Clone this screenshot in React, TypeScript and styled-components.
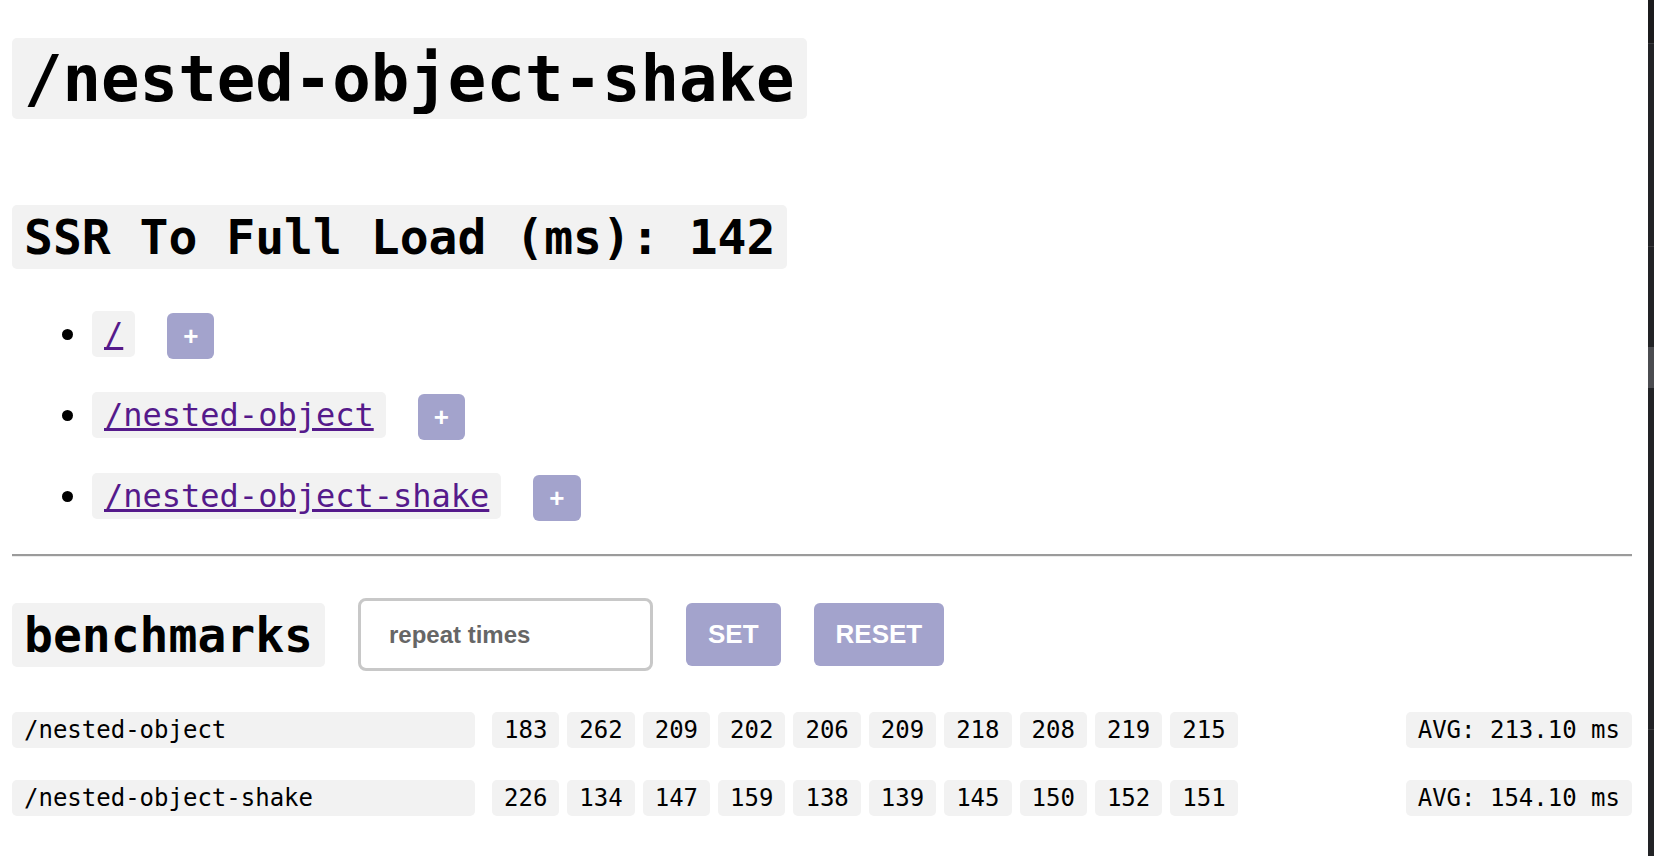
import React from "react";
import styled, { createGlobalStyle } from "styled-components";

const GlobalStyle = createGlobalStyle`
  html, body {
    margin: 0;
    padding: 0;
    background: #ffffff;
    color: #000000;
    font-family: "DejaVu Sans Mono", "Liberation Mono", monospace;
  }
  * { box-sizing: border-box; }
`;

const Page = styled.div`
  display: flex;
  min-height: 856px;
  width: 100%;
`;

const Main = styled.main`
  flex: 1;
  display: flex;
  flex-direction: column;
  padding: 38px 16px 0 12px;
  min-width: 0;
`;

const SideStrip = styled.div`
  width: 6px;
  flex-shrink: 0;
  background: linear-gradient(
    to bottom,
    #1b1b1d 0 43px,
    #3b3b3e 43px 44px,
    #222326 44px 246px,
    #3b3b3e 246px 247px,
    #222326 247px 347px,
    #4b4c50 347px 388px,
    #222326 388px 729px,
    #3b3b3e 729px 730px,
    #222326 730px
  );
`;

const CodeBox = styled.code<{ $size: number; $bold?: boolean; $padY?: number }>`
  display: inline-block;
  align-self: flex-start;
  background: #f2f2f2;
  border-radius: 5px;
  padding: ${(p) => p.$padY ?? 4}px 12px;
  font-family: "DejaVu Sans Mono", "Liberation Mono", monospace;
  font-size: ${(p) => p.$size}px;
  font-weight: ${(p) => (p.$bold ? 700 : 400)};
  line-height: normal;
  white-space: pre;
  color: #000;
`;

const Title = styled.h1`
  margin: 0;
  display: flex;
`;

const SubTitle = styled.h2`
  margin: 86px 0 0 0;
  display: flex;
`;

const LinkList = styled.ul`
  list-style: none;
  margin: 42px 0 0 0;
  padding: 0 0 0 50px;
  display: flex;
  flex-direction: column;
  gap: 33px;
`;

const LinkItem = styled.li`
  display: flex;
  align-items: flex-start;
`;

const Bullet = styled.span`
  width: 11px;
  height: 11px;
  border-radius: 50%;
  background: #000;
  margin-top: 18px;
  margin-right: 19px;
  flex-shrink: 0;
`;

const PageLink = styled.a`
  color: #551a8b;
  text-decoration: underline;
  text-underline-offset: 2px;
`;

const PlusButton = styled.button`
  margin-left: 32px;
  margin-top: 2px;
  height: 46px;
  padding: 0 16px;
  border: none;
  border-radius: 6px;
  background: #a3a3cc;
  color: #ffffff;
  font-family: "Liberation Sans", Arial, sans-serif;
  font-weight: 700;
  font-size: 26px;
  line-height: 1;
  cursor: pointer;
`;

const Divider = styled.hr`
  margin: 33px 0 0 0;
  border: none;
  border-top: 2px solid #9b9b9b;
  border-bottom: 1px solid #ececec;
  height: 0;
`;

const BenchHeader = styled.div`
  margin-top: 41px;
  display: flex;
  align-items: center;
  gap: 33px;
`;

const BenchTitle = styled.h3`
  margin: 0;
  display: flex;
`;

const RepeatInput = styled.input`
  width: 295px;
  height: 73px;
  border: 3px solid #c8c8c8;
  border-radius: 8px;
  padding: 0 28px;
  font-family: "Liberation Sans", Arial, sans-serif;
  font-weight: 700;
  font-size: 24px;
  color: #333;
  outline: none;
  &::placeholder {
    color: #666666;
  }
`;

const ActionButton = styled.button`
  height: 63px;
  padding: 0 22px;
  border: none;
  border-radius: 6px;
  background: #a3a3cc;
  color: #ffffff;
  font-family: "Liberation Sans", Arial, sans-serif;
  font-weight: 700;
  font-size: 26px;
  cursor: pointer;
`;

const ResultList = styled.div`
  margin-top: 41px;
  display: flex;
  flex-direction: column;
  gap: 32px;
`;

const ResultRow = styled.div`
  display: flex;
  align-items: center;
`;

const RowLabel = styled(CodeBox)`
  width: 463px;
  margin-right: 17px;
`;

const Cells = styled.div`
  display: flex;
  gap: 8px;
`;

const Avg = styled(CodeBox)`
  margin-left: auto;
`;

const links = ["/", "/nested-object", "/nested-object-shake"];

const results = [
  {
    name: "/nested-object",
    times: [183, 262, 209, 202, 206, 209, 218, 208, 219, 215],
    avg: "213.10",
  },
  {
    name: "/nested-object-shake",
    times: [226, 134, 147, 159, 138, 139, 145, 150, 152, 151],
    avg: "154.10",
  },
];

export default function App() {
  return (
    <>
      <GlobalStyle />
      <Page>
        <Main>
          <Title>
            <CodeBox $size={64} $bold $padY={3.5}>
              /nested-object-shake
            </CodeBox>
          </Title>
          <SubTitle>
            <CodeBox $size={48} $bold>
              SSR To Full Load (ms): 142
            </CodeBox>
          </SubTitle>
          <LinkList>
            {links.map((l) => (
              <LinkItem key={l}>
                <Bullet />
                <CodeBox $size={32}>
                  <PageLink href={l}>{l}</PageLink>
                </CodeBox>
                <PlusButton>+</PlusButton>
              </LinkItem>
            ))}
          </LinkList>
          <Divider />
          <BenchHeader>
            <BenchTitle>
              <CodeBox $size={48} $bold>
                benchmarks
              </CodeBox>
            </BenchTitle>
            <RepeatInput placeholder="repeat times" />
            <ActionButton>SET</ActionButton>
            <ActionButton>RESET</ActionButton>
          </BenchHeader>
          <ResultList>
            {results.map((r) => (
              <ResultRow key={r.name}>
                <RowLabel $size={24}>{r.name}</RowLabel>
                <Cells>
                  {r.times.map((t, i) => (
                    <CodeBox key={i} $size={24}>
                      {t}
                    </CodeBox>
                  ))}
                </Cells>
                <Avg $size={24}>AVG: {r.avg} ms</Avg>
              </ResultRow>
            ))}
          </ResultList>
        </Main>
        <SideStrip />
      </Page>
    </>
  );
}
